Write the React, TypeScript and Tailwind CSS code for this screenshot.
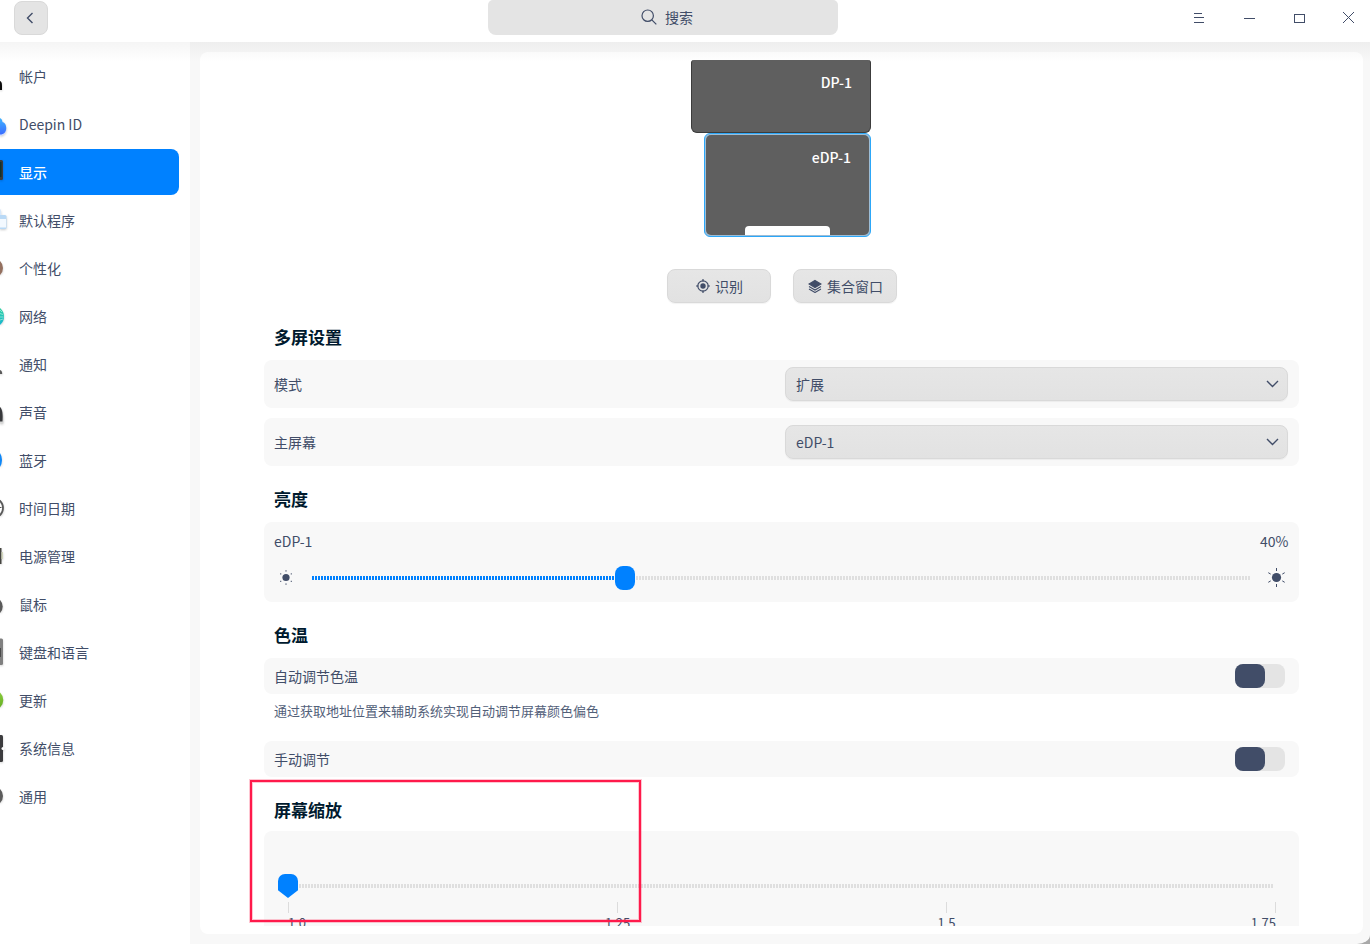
import type { ReactNode } from "react";

const ink = "#414d68";

type MenuItem = { label: string; icon: ReactNode };

const menu: MenuItem[] = [
  {
    label: "帐户",
    icon: <path d="M0 28C1.400 28.500 2 30 2 32.500v4.500H0Z" fill="#0b0b0b" />,
  },
  {
    label: "Deepin ID",
    icon: (
      <>
        <path d="M0 20c3 0 6.500 3 6.500 7.500S4 34.500 0 35Z" fill="#cfdcff" />
        <path d="M0 17c1.500.6 2.400 2.300 2.400 4C4.800 21.500 6.200 24 6.200 27c0 4-2 6.500-6.200 6.500Z" fill="url(#cloud)" />
      </>
    ),
  },
  {
    label: "显示",
    icon: (
      <>
        <path d="M0 11h1.500a1.500 1.500 0 0 1 1.500 1.500v17a1.500 1.500 0 0 1-1.500 1.500H0Z" fill="#3b3b3b" />
        <path d="M0 13h1.500v15H0Z" fill="#12332b" />
      </>
    ),
  },
  {
    label: "默认程序",
    icon: (
      <>
        <path d="M0 12c1 .5 1.300 2 1.300 6H0Z" fill="#d8e8fa" />
        <path d="M0 18h5a1.500 1.500 0 0 1 1.500 1.500v11A1.500 1.500 0 0 1 5 32H0Z" fill="#b9d9f6" />
        <path d="M0 22h6v8.500H0Z" fill="#f3f9ff" />
      </>
    ),
  },
  {
    label: "个性化",
    icon: <circle cx="-7" cy="23" r="10" fill="#94705f" />,
  },
  {
    label: "网络",
    icon: (
      <>
        <circle cx="-7" cy="23.500" r="11" fill="url(#net)" />
        <path d="M0 17l2 2M0 20.500l3 1M0 24h3.500M0 27l3-1" stroke="#9feadb" strokeWidth=".8" />
      </>
    ),
  },
  {
    label: "通知",
    icon: <path d="M0 29c1.500.5 2.200 1.500 2.200 4H0Z" fill="#5a5a5a" />,
  },
  {
    label: "声音",
    icon: (
      <>
        <path d="M0 18c3 2 4 9 3.300 16.500H0Z" fill="#d6d6d6" />
        <path d="M0 18c2.500 2 3 8 2.500 14.500H0Z" fill="#37383b" />
      </>
    ),
  },
  {
    label: "蓝牙",
    icon: <ellipse cx="-7" cy="23" rx="9" ry="11" fill="#0d87f8" />,
  },
  {
    label: "时间日期",
    icon: (
      <>
        <circle cx="-7" cy="23" r="10" fill="#fff" stroke="#595959" strokeWidth="1.800" />
        <path d="M0 22.500h1.500" stroke="#595959" />
      </>
    ),
  },
  {
    label: "电源管理",
    icon: (
      <>
        <path d="M0 15h1.500v16H0Z" fill="#454540" />
        <path d="M1.500 19H3v7H1.500Z" fill="#d2d6bc" />
      </>
    ),
  },
  {
    label: "鼠标",
    icon: <ellipse cx="-5" cy="25.500" rx="7.700" ry="8.500" fill="#5a5a5a" />,
  },
  {
    label: "键盘和语言",
    icon: (
      <>
        <path d="M0 9.500h1.500A1.500 1.500 0 0 1 3 11v23.500A1.500 1.500 0 0 1 1.500 36H0Z" fill="#808080" />
        <path d="M0 19h1v9H0Z" fill="#4b4b4b" />
      </>
    ),
  },
  {
    label: "更新",
    icon: <circle cx="-7" cy="23" r="10.300" fill="url(#upd)" />,
  },
  {
    label: "系统信息",
    icon: (
      <>
        <path d="M0 10h1.500A1.500 1.500 0 0 1 3 11.500v24A1.500 1.500 0 0 1 1.500 37H0Z" fill="#3c3c3e" />
        <circle cx="3" cy="23.500" r="1.500" fill="#fff" />
      </>
    ),
  },
  {
    label: "通用",
    icon: <circle cx="-7" cy="23" r="10" fill="#5c5c5c" />,
  },
];

function Sidebar({ active }: { active: string }) {
  return (
    <nav className="flex w-[190px] shrink-0 flex-col gap-0.5 overflow-hidden bg-white pt-[11px]">
      <svg width="0" height="0" className="absolute">
        <defs>
          <linearGradient id="cloud" x1="0" y1="0" x2="0" y2="1">
            <stop offset="0" stopColor="#3fb4ff" />
            <stop offset="1" stopColor="#3a6cff" />
          </linearGradient>
          <linearGradient id="net" x1="0" y1="0" x2="0" y2="1">
            <stop offset="0" stopColor="#35d69b" />
            <stop offset="1" stopColor="#14b2d8" />
          </linearGradient>
          <linearGradient id="upd" x1="0" y1="0" x2="0" y2="1">
            <stop offset="0" stopColor="#8fd040" />
            <stop offset="1" stopColor="#5faa1f" />
          </linearGradient>
        </defs>
      </svg>
      {menu.map(({ label, icon }) => (
        <a
          key={label}
          className={`flex h-[46px] w-[179px] shrink-0 items-center rounded-r-lg ${
            label === active ? "bg-[#0081ff] font-medium text-white" : ""
          }`}
        >
          <svg
            width="19"
            height="46"
            viewBox="0 0 19 46"
            className="shrink-0 drop-shadow-[0_1px_1px_rgba(0,0,0,0.2)]"
          >
            {icon}
          </svg>
          <span>{label}</span>
        </a>
      ))}
    </nav>
  );
}

function TitleBar() {
  return (
    <header className="flex h-[42px] shrink-0 items-start justify-between bg-white">
      <div className="flex w-[488px] pt-px pl-3.5">
        <button className="grid size-[34px] place-items-center rounded-lg border border-[#d9d9d9] bg-[#e4e4e4] pr-0.5">
          <svg width="8" height="12" viewBox="0 0 8 12" fill="none" stroke={ink} strokeWidth="1.400">
            <path d="M6.500 1 1.500 6l5 5" />
          </svg>
        </button>
      </div>
      <div className="flex h-[35px] w-[350px] items-center justify-center gap-2 rounded-b-lg rounded-t-[5px] bg-[#e4e4e4] pb-px pl-2">
        <svg width="16" height="16" viewBox="0 0 16 16" fill="none" stroke={ink} strokeWidth="1.200">
          <circle cx="6.700" cy="6.700" r="5.700" />
          <path d="m10.800 10.800 4.500 4.500" />
        </svg>
        <span>搜索</span>
      </div>
      <svg
        className="ml-auto"
        width="180"
        height="42"
        viewBox="0 0 180 42"
        fill="none"
        stroke={ink}
        shapeRendering="crispEdges"
      >
        <path d="M4 13.500h8M4 17.500h10M4 22.500h10M54 18.500h11M104.500 14.500h10v8h-10z" />
        <path d="m153 12 11 11M164 12l-11 11" />
      </svg>
    </header>
  );
}

function Screens() {
  return (
    <div className="flex shrink-0 flex-col items-center">
      <div className="mr-px flex w-[180px] flex-col items-end">
        <div className="flex h-[73px] w-[180px] justify-end rounded-t-[3px] rounded-b-md border border-t-0 border-[#3c3c3c] bg-[#5f5f5f] pt-[11px] pr-[18px] leading-[22px] font-medium text-white">
          DP-1
        </div>
        <div className="flex h-[104px] w-[167px] rounded-md border border-[#2ca7f8] bg-[#9dbdd6] p-px">
          <div className="flex size-full flex-col items-end justify-between rounded-[5px] bg-[#5f5f5f] pt-[11px] leading-[22px] font-medium text-white">
            <span className="pr-[18px]">eDP-1</span>
            <span className="mr-[39px] h-[9px] w-[85px] rounded-t bg-white" />
          </div>
        </div>
      </div>
      <div className="mt-8 flex gap-[22px]">
        <ToolButton label="识别">
          <svg width="14" height="14" viewBox="0 0 14 14" fill="none" stroke={ink} strokeWidth="1.200">
            <circle cx="7" cy="7" r="5.200" />
            <circle cx="7" cy="7" r="2.700" fill={ink} stroke="none" />
            <path d="M7 0v2.500M7 11.500V14M0 7h2.500M11.500 7H14" />
          </svg>
        </ToolButton>
        <ToolButton label="集合窗口">
          <svg width="14" height="14" viewBox="0 0 14 14" fill="none" stroke={ink} strokeWidth="1.100">
            <path d="m7 1.500 6 3.500L7 8.500 1 5Z" fill={ink} />
            <path d="m1 7.500 6 3.500 6-3.500M1 10l6 3.500 6-3.500" />
          </svg>
        </ToolButton>
      </div>
    </div>
  );
}

function ToolButton({ label, children }: { label: string; children: ReactNode }) {
  return (
    <button className="flex h-[34px] w-[104px] items-center justify-center gap-[5px] rounded-lg border border-[#d9d9d9] bg-linear-to-b from-[#e6e6e6] to-[#e2e2e2] pl-0.5 shadow-[0_1px_1px_rgba(0,0,0,0.05)]">
      {children}
      <span>{label}</span>
    </button>
  );
}

function Heading({ children }: { children: ReactNode }) {
  return <h2 className="h-6 shrink-0 pl-2.5 text-[17px] leading-6 font-bold text-[#001a2e]">{children}</h2>;
}

function SelectRow({ label, value }: { label: string; value: string }) {
  return (
    <div className="flex h-12 items-center justify-between rounded-lg bg-[#f8f8f8] pr-[11px] pl-2.5">
      <span>{label}</span>
      <button className="flex h-[34px] w-[503px] items-center justify-between rounded-lg border border-[#d9d9d9] bg-linear-to-b from-[#e6e6e6] to-[#e2e2e2] pr-[7px] pl-2.5 shadow-[0_1px_1px_rgba(0,0,0,0.05)]">
        <span>{value}</span>
        <svg width="14" height="8" viewBox="0 0 14 8" fill="none" stroke={ink} strokeWidth="1.400">
          <path d="m1 1 5.500 5.500L12 1" />
        </svg>
      </button>
    </div>
  );
}

function SwitchRow({ label }: { label: string }) {
  return (
    <div className="flex h-9 shrink-0 items-center justify-between rounded-lg bg-[#f8f8f8] pr-3.5 pl-2.5">
      <span>{label}</span>
      <button role="switch" aria-checked={false} className="h-6 w-[50px] rounded-lg bg-[#e4e4e4]">
        <span className="block h-6 w-[30px] rounded-lg bg-[#414d68]" />
      </button>
    </div>
  );
}

function Sun({ size }: { size: "small" | "large" }) {
  if (size === "small") {
    return (
      <svg width="16" height="16" viewBox="0 0 16 16" fill={ink}>
        <circle cx="8" cy="7.500" r="3.600" />
        <path d="M7 0h2v1.700H7zM7 13.300h2V15H7z" opacity=".4" />
        <path d="M2 3.300h1.300v1.300H2zM12.700 3.300H14v1.300h-1.300zM2 10.800h1.300v1.300H2zM12.700 10.800H14v1.300h-1.300z" opacity=".75" />
      </svg>
    );
  }
  return (
    <svg width="20" height="20" viewBox="0 0 20 20" fill="none" stroke={ink}>
      <circle cx="9.500" cy="9.500" r="4.600" fill={ink} stroke="none" />
      <path d="M9.500 0v3M9.500 16v3M1.300 4.700l2.400 1.400M17.700 4.700l-2.400 1.400M1.300 14.300l2.400-1.400M17.700 14.300l-2.400-1.400" />
    </svg>
  );
}

const dotsOn = "h-1 bg-[repeating-linear-gradient(90deg,#0081ff_0,#0081ff_2px,transparent_2px,transparent_3px)]";
const dotsOff = "h-1 bg-[repeating-linear-gradient(90deg,#dfdfdf_0,#dfdfdf_2px,transparent_2px,transparent_3px)]";

function Brightness() {
  return (
    <div className="h-20 shrink-0 rounded-lg bg-[#f8f8f8] px-2.5 pt-2">
      <div className="flex h-[22px] items-center justify-between pr-[0.5px]">
        <span>eDP-1</span>
        <span>40%</span>
      </div>
      <div className="mt-3.5 flex h-6 items-center">
        <span className="flex w-[38px] pl-1">
          <Sun size="small" />
        </span>
        <div className={`w-[303px] ${dotsOn}`} />
        <div className="h-6 w-5 rounded-lg bg-[#0081ff]" />
        <div className="w-px" />
        <div className={`w-[614px] ${dotsOff}`} />
        <span className="ml-[17px] flex">
          <Sun size="large" />
        </span>
      </div>
    </div>
  );
}

function Scaling() {
  return (
    <div className="h-[150px] shrink-0 rounded-lg bg-[#f8f8f8] pt-[43px] pr-6 pl-3.5">
      <div className="flex h-6 items-center">
        <svg width="20" height="24" viewBox="0 0 20 24" fill="#0081ff">
          <path d="M7 0h6a7 7 0 0 1 7 7v9.200L10 24 0 16.200V7a7 7 0 0 1 7-7Z" />
        </svg>
        <div className="w-px" />
        <div className={`w-[975px] ${dotsOff}`} />
      </div>
      <div className="mt-1 ml-2.5 flex w-[988px] justify-between">
        {["1.0", "1.25", "1.5", "1.75"].map((mark) => (
          <div
            key={mark}
            className="flex w-px flex-col items-center text-[13px] leading-5 first:items-start last:items-end"
          >
            <span className="h-[11px] w-px bg-[#dcdcdc]" />
            <span>{mark}</span>
          </div>
        ))}
      </div>
    </div>
  );
}

export default function App() {
  return (
    <div className="relative h-[944px] w-[1370px] overflow-hidden bg-[#a9a9a9] font-['Noto_Sans_CJK_SC',sans-serif] text-[14px] leading-[22px] text-[#414d68]">
      <div className="flex h-full flex-col overflow-hidden rounded-br-[13px_9px] bg-[#f8f8f8]">
        <TitleBar />
        <div className="relative flex min-h-0 flex-1">
          <Sidebar active="显示" />
          <main className="my-2.5 mr-[7px] ml-2.5 min-w-0 flex-1 rounded-lg bg-white py-2 pr-16 pl-16">
            <div className="flex h-full flex-col overflow-hidden">
              <Screens />
              <div className="mt-[22px]">
                <Heading>多屏设置</Heading>
              </div>
              <div className="mt-[11px] flex shrink-0 flex-col gap-2.5">
                <SelectRow label="模式" value="扩展" />
                <SelectRow label="主屏幕" value="eDP-1" />
              </div>
              <div className="mt-[21px] mb-[11px]">
                <Heading>亮度</Heading>
              </div>
              <Brightness />
              <div className="mt-[21px] mb-[11px]">
                <Heading>色温</Heading>
              </div>
              <SwitchRow label="自动调节色温" />
              <p className="mt-1.5 mb-[19px] shrink-0 pl-2.5 text-[13px] text-[#526079]">
                通过获取地址位置来辅助系统实现自动调节屏幕颜色偏色
              </p>
              <SwitchRow label="手动调节" />
              <div className="mt-[21px] mb-[9px]">
                <Heading>屏幕缩放</Heading>
              </div>
              <Scaling />
            </div>
          </main>
          <div className="pointer-events-none absolute inset-x-0 top-0 h-5 bg-linear-to-b from-black/4 to-transparent" />
        </div>
      </div>
      <div className="pointer-events-none absolute top-[780px] left-[250px] h-[142px] w-[391px] border-2 border-[#ff1a4b] shadow-[0_0_0_1px_rgba(255,26,75,0.25),inset_0_0_0_1px_rgba(255,26,75,0.25)]" />
    </div>
  );
}
